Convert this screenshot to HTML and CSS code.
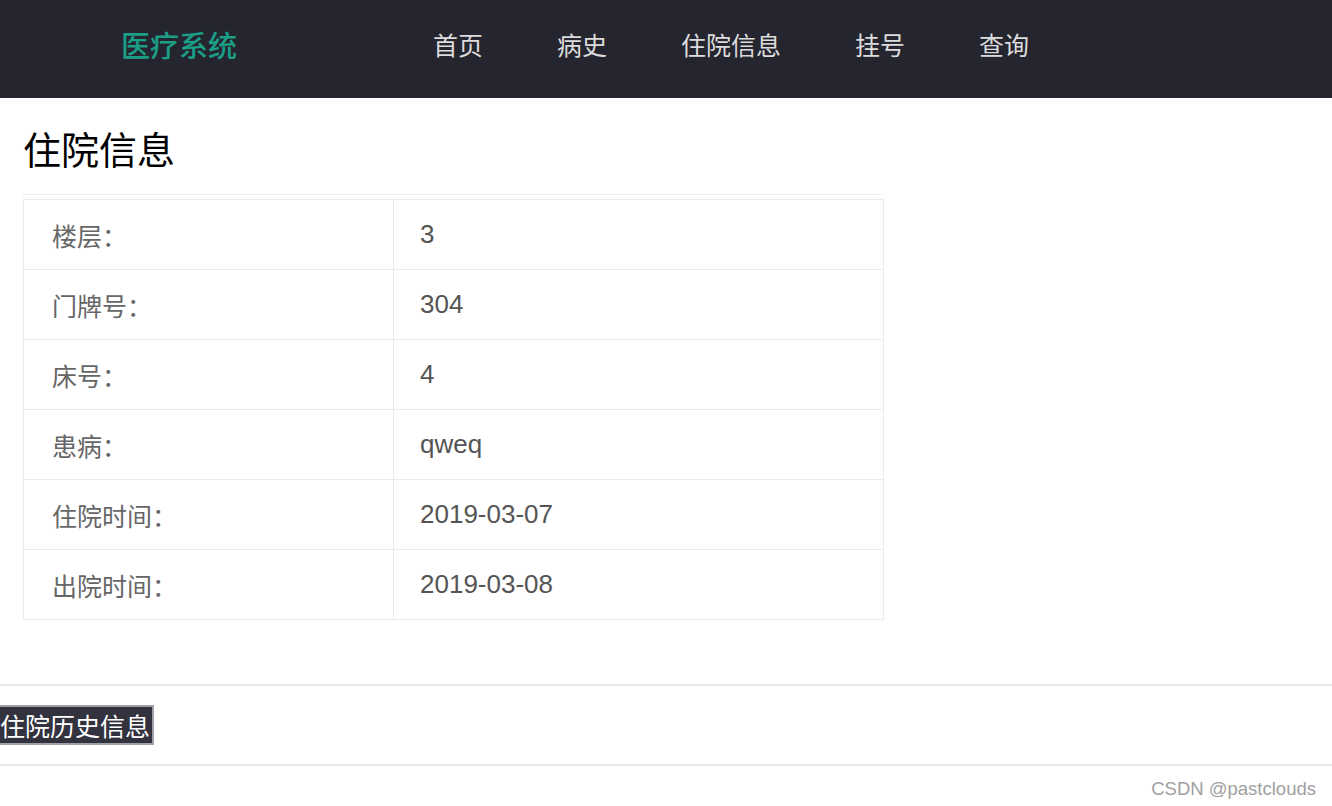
FILE: index.html
```html
<!DOCTYPE html>
<html lang="zh-CN">

<head>
    <meta charset="UTF-8">
    <meta name="viewport" content="width=device-width, initial-scale=1.0">
    <title>住院信息</title>
    <link rel="stylesheet" href="styles.css">
</head>

<body>
    <nav class="navbar">
        <div class="logo">医疗系统</div>
        <ul class="nav-links">
            <li><a href="#">首页</a></li>
            <li><a href="#">病史</a></li>
            <li><a href="#">住院信息</a></li>
            <li><a href="#">挂号</a></li>
            <li><a href="#">查询</a></li>
        </ul>
    </nav>

    <main class="content">
        <h1>住院信息</h1>
        <div class="table-wrap">
            <table class="info-table">
                <tbody>
                    <tr>
                        <td class="label">楼层：</td>
                        <td>3</td>
                    </tr>
                    <tr>
                        <td class="label">门牌号：</td>
                        <td>304</td>
                    </tr>
                    <tr>
                        <td class="label">床号：</td>
                        <td>4</td>
                    </tr>
                    <tr>
                        <td class="label">患病：</td>
                        <td>qweq</td>
                    </tr>
                    <tr>
                        <td class="label">住院时间：</td>
                        <td>2019-03-07</td>
                    </tr>
                    <tr>
                        <td class="label">出院时间：</td>
                        <td>2019-03-08</td>
                    </tr>
                </tbody>
            </table>
        </div>
    </main>

    <section class="history">
        <button class="history-btn">住院历史信息</button>
    </section>

    <footer class="watermark">CSDN @pastclouds</footer>
</body>

</html>
```

FILE: styles.css
```css
body {
    margin: 0;
    padding: 0;
    background-color: #fff;
    font-family: "Liberation Sans", "Noto Sans CJK SC", sans-serif;
}

.navbar {
    height: 98px;
    background-color: #25252f;
    display: flex;
    align-items: center;
    padding-bottom: 10px;
    box-sizing: border-box;
}

.logo {
    margin-left: 121px;
    width: 312px;
    font-size: 29px;
    color: #1b9e86;
    font-weight: 500;
}

.nav-links {
    list-style: none;
    margin: 0;
    padding: 0;
    display: flex;
}

.nav-links li {
    margin-right: 74px;
}

.nav-links a {
    color: #dcdcdc;
    text-decoration: none;
    font-size: 25px;
}

.content {
    padding: 0 0 0 23px;
}

h1 {
    margin: 0;
    padding-top: 31px;
    height: 65px;
    font-size: 38px;
    font-weight: normal;
    color: #000;
    line-height: 44px;
}

.table-wrap {
    width: 861px;
    border-top: 1px solid #f2f2f2;
    padding-top: 4px;
}

.info-table {
    width: 100%;
    border-collapse: collapse;
    border: 1px solid #ebebeb;
    font-size: 26px;
    color: #555;
}

.info-table td {
    height: 69px;
    padding: 0 0 0 26px;
    border: 1px solid #ebebeb;
}

.info-table td.label {
    width: 341px;
    padding-left: 28px;
    font-size: 25px;
    color: #666;
}

.history {
    margin-top: 64px;
    border-top: 2px solid #e8e8e8;
    border-bottom: 2px solid #e8e8e8;
    height: 78px;
    display: flex;
    align-items: center;
}

.history-btn {
    margin: 0;
    padding: 0 2px 0 0;
    height: 40px;
    background-color: #33323f;
    color: #fff;
    font-family: "Noto Sans CJK SC", sans-serif;
    font-size: 25px;
    border: 2px solid #a0a0a8;
    border-left: none;
    border-radius: 0;
    line-height: 34px;
}

.watermark {
    text-align: right;
    padding: 12px 16px 0 0;
    font-size: 18.5px;
    color: #a0a0a0;
}
```
